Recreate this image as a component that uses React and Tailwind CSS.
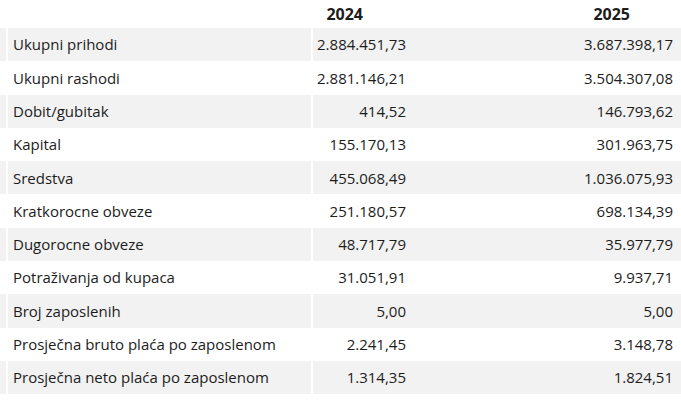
import React from "react";

const rows = [
  ["Ukupni prihodi", "2.884.451,73", "3.687.398,17"],
  ["Ukupni rashodi", "2.881.146,21", "3.504.307,08"],
  ["Dobit/gubitak", "414,52", "146.793,62"],
  ["Kapital", "155.170,13", "301.963,75"],
  ["Sredstva", "455.068,49", "1.036.075,93"],
  ["Kratkorocne obveze", "251.180,57", "698.134,39"],
  ["Dugorocne obveze", "48.717,79", "35.977,79"],
  ["Potraživanja od kupaca", "31.051,91", "9.937,71"],
  ["Broj zaposlenih", "5,00", "5,00"],
  ["Prosječna bruto plaća po zaposlenom", "2.241,45", "3.148,78"],
  ["Prosječna neto plaća po zaposlenom", "1.314,35", "1.824,51"],
];

export default function App() {
  return (
    <div
      className="w-[681px] h-[401px] overflow-hidden bg-white text-[15px] text-[#1c1c1c]"
      style={{ fontFamily: '"Open Sans", "Noto Sans", sans-serif' }}
    >
      {/* header */}
      <div className="flex h-[28px] items-center font-bold text-[16px]">
        <div className="w-[313px]" />
        <div className="w-[101px] text-right pr-[51px]">2024</div>
        <div className="flex-1 text-right pr-[51px]">2025</div>
      </div>

      {rows.map(([label, a, b], i) => {
        const bg = i % 2 === 0 ? "bg-[#f2f2f2]" : "bg-white";
        return (
          <div key={label} className="flex h-[33.3px] gap-[2px]">
            <div className={`w-[6px] ${bg}`} />
            <div className={`w-[303px] flex items-center pl-[5px] ${bg}`}>{label}</div>
            <div className={`flex-1 flex items-center ${bg}`}>
              <div className="w-[101px] text-right pr-[8px]">{a}</div>
              <div className="flex-1 text-right pr-[8px]">{b}</div>
            </div>
          </div>
        );
      })}
    </div>
  );
}
